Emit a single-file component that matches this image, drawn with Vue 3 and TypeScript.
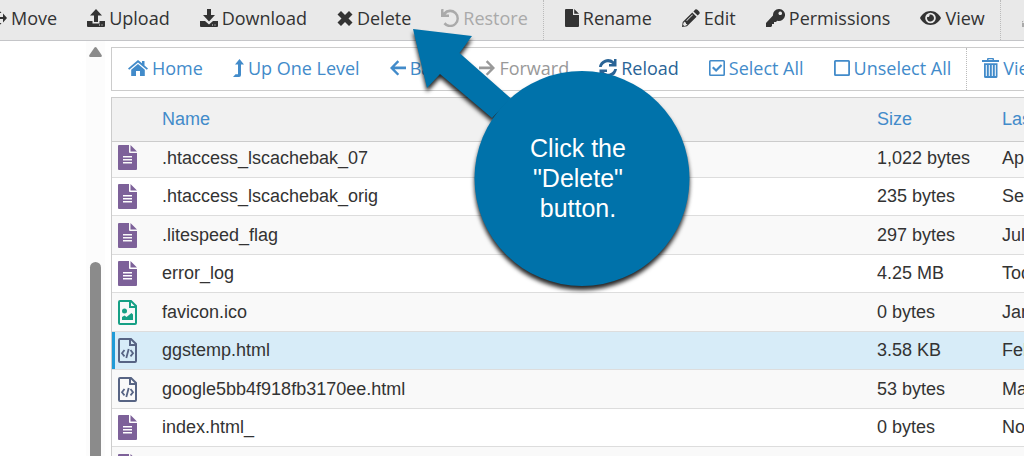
<script setup lang="ts">
type FileKind = 'text' | 'image' | 'code'

interface FileRow {
  name: string
  size: string
  modified: string
  kind: FileKind
  selected?: boolean
}

interface Action {
  label: string
  icon: string
  state?: 'disabled' | 'active'
  divider?: boolean
}

const mainActions: Action[] = [
  { label: 'Move', icon: 'move' },
  { label: 'Upload', icon: 'upload' },
  { label: 'Download', icon: 'download' },
  { label: 'Delete', icon: 'delete' },
  { label: 'Restore', icon: 'restore', state: 'disabled', divider: true },
  { label: 'Rename', icon: 'file' },
  { label: 'Edit', icon: 'pencil' },
  { label: 'Permissions', icon: 'key' },
  { label: 'View', icon: 'eye', divider: true },
]

const navActions: Action[] = [
  { label: 'Home', icon: 'home' },
  { label: 'Up One Level', icon: 'level' },
  { label: 'Back', icon: 'back' },
  { label: 'Forward', icon: 'forward', state: 'disabled' },
  { label: 'Reload', icon: 'reload', state: 'active' },
  { label: 'Select All', icon: 'checked' },
  { label: 'Unselect All', icon: 'unchecked', divider: true },
  { label: 'View Trash', icon: 'trash' },
]

const files: FileRow[] = [
  { name: '.htaccess_lscachebak_07', size: '1,022 bytes', modified: 'Apr', kind: 'text' },
  { name: '.htaccess_lscachebak_orig', size: '235 bytes', modified: 'Sep', kind: 'text' },
  { name: '.litespeed_flag', size: '297 bytes', modified: 'Jul', kind: 'text' },
  { name: 'error_log', size: '4.25 MB', modified: 'Today', kind: 'text' },
  { name: 'favicon.ico', size: '0 bytes', modified: 'Jan', kind: 'image' },
  { name: 'ggstemp.html', size: '3.58 KB', modified: 'Feb', kind: 'code', selected: true },
  { name: 'google5bb4f918fb3170ee.html', size: '53 bytes', modified: 'Mar', kind: 'code' },
  { name: 'index.html_', size: '0 bytes', modified: 'Nov', kind: 'text' },
  { name: '', size: '', modified: '', kind: 'text' },
]

/* Filled shapes, each with its own drawing box. */
const icons: Record<string, { w: number; h: number; d: string }> = {
  move: { w: 18, h: 18, d: 'M9 0l3.500 4H10v4h4V4.500L18 9l-4 4.500V10h-4v4h2.500L9 18l-3.500-4H8v-4H4v3.500L0 9l4-4.500V8h4V4H5.500z' },
  upload: { w: 18, h: 18, d: 'M9 0l6 6.500h-4V13H7V6.500H3zM0 12h5.500v2.500h7V12H18v5q0 1-1 1H1q-1 0-1-1zm12 3.500v1h1v-1zm2.500 0v1h1v-1z' },
  download: { w: 18, h: 18, d: 'M7 0h4v6h4l-6 6.500L3 6h4zM0 12h5l4 3.500 4-3.500h5v5q0 1-1 1H1q-1 0-1-1zm12 3.500v1h1v-1zm2.500 0v1h1v-1z' },
  delete: { w: 16, h: 15, d: 'M4 0l4 4 4-4 3.500 3.500-4 4 4 4L12 15l-4-4-4 4L.5 11.500l4-4-4-4z' },
  restore: { w: 18, h: 18, d: 'M1 0h1.500v3.600A8.800 8.800 0 1 1 2.500 15.200l1.900-1.900A6.200 6.200 0 1 0 4.600 5.500H8V8H0V1q0-1 1-1z' },
  file: { w: 14, h: 18, d: 'M1 0h7v6h6v11q0 1-1 1H1q-1 0-1-1V1q0-1 1-1zM9.200 0L14 4.800H9.200z' },
  pencil: { w: 18, h: 18, d: 'M12.400 1.400q1.500-2 3.300-.3l1.200 1.200q1.800 1.700-.2 3.300l-1 1-4.300-4.200zM10.300 3.500l4.300 4.300L5 17.300 0 18l.7-5zM3 12.500l-1.500 1.300-.4 2 1.100 1.100 2-.4L5.500 15H4v-1.500H3zM10.300 5.500l-6 6 .6.600 6-6z' },
  key: { w: 19, h: 18, d: 'M12.800 0a6 6 0 1 1-1.600 11.700L10 13H8v2H6v2l-1 1H0v-4l7-7.400A6 6 0 0 1 12.800 0zm1.400 2.500a1.800 1.800 0 1 0 .1 0z' },
  eye: { w: 21, h: 14, d: 'M10.500 0C15 0 19 2.800 21 7c-2 4.200-6 7-10.500 7S2 11.200 0 7C2 2.800 6 0 10.500 0zm0 1.700a5.300 5.300 0 1 0 0 10.600 5.300 5.300 0 0 0 0-10.600zm0 1.800a3.500 3.500 0 1 1-3.300 2.300A1.700 1.700 0 0 0 9.500 3.600z' },
  home: { w: 20, h: 16, d: 'M10 0l4 3.300V1h2.500v4.500L20 8.400l-1.200 1.400L10 2.500 1.200 9.800 0 8.400zM10 4l6.800 5.700V16H12v-5H8v5H3.200V9.700z' },
  level: { w: 11, h: 18, d: 'M6.500 0L11 5.500H8V16q0 2-2 2H0l2.500-2.700H5V5.500H2z' },
  back: { w: 16, h: 16, d: 'M7.500.2l1.700 1.700-4.600 4.700H16v2.600H4.600l4.600 4.700-1.700 1.700L0 7.900z' },
  forward: { w: 16, h: 16, d: 'M8.500.2L6.800 1.900l4.600 4.700H0v2.600h11.400l-4.600 4.700 1.700 1.700L16 7.900z' },
  reload: { w: 18, h: 18, d: 'M0 8A9 9 0 0 1 15 2.500V0h2.500v7.500H10V5h3.300A6.400 6.400 0 0 0 2.700 8zM18 10A9 9 0 0 1 3 15.500V18H.5v-7.500H8V13H4.700a6.400 6.400 0 0 0 10.600-3z' },
  checked: { w: 16, h: 16, d: 'M1.500 0h13Q16 0 16 1.500v13q0 1.500-1.500 1.500h-13Q0 16 0 14.500v-13Q0 0 1.500 0zm.1 1.600v12.800h12.800V1.600zM11.800 4.200l1.500 1.500-6.200 6.200L3 7.900l1.500-1.400 2.600 2.500z' },
  unchecked: { w: 16, h: 16, d: 'M1.500 0h13Q16 0 16 1.500v13q0 1.500-1.500 1.500h-13Q0 16 0 14.500v-13Q0 0 1.500 0zm.3 1.800v12.400h12.400V1.800z' },
  trash: { w: 17, h: 20, d: 'M5 2V1q0-1 1-1h5q1 0 1 1v1h5v2H0V2zm1.500-.7V2h4v-.7zM2 5.300h13.500V18.500q0 1.500-1.500 1.500H3.500Q2 20 2 18.500zM3.800 7v11h1V7zm3 0v11h1V7zm3 0v11h1V7zm3 0v11h1V7z' },
}
</script>

<template>
  <div class="app">
    <nav class="toolbar" aria-label="File actions">
      <template v-for="action in mainActions" :key="action.label">
        <button type="button" :class="['action', action.state]" :disabled="action.state === 'disabled'">
          <svg :width="icons[action.icon].w" :height="icons[action.icon].h" :viewBox="`0 0 ${icons[action.icon].w} ${icons[action.icon].h}`" aria-hidden="true">
            <path :d="icons[action.icon].d" fill="currentColor" fill-rule="evenodd" />
          </svg>
          <span>{{ action.label }}</span>
        </button>
        <i v-if="action.divider" class="divider"></i>
      </template>
      <button type="button" class="action disabled" disabled aria-label="Extract">
        <svg width="18" height="18" viewBox="0 0 18 18" aria-hidden="true">
          <path d="M7 5l-7 9h7zM11 5l7 9h-7zM0 12h2v6H0z" fill="currentColor" />
        </svg>
      </button>
    </nav>

    <div class="body">
      <aside class="sidebar">
        <div class="track">
          <svg class="track-arrow" width="13" height="10" viewBox="0 0 13 10" aria-hidden="true">
            <path d="M5.500.6q1-1.200 2 0L12.600 8q.8 2-1 2H1.400q-1.800 0-1-2z" fill="currentColor" />
          </svg>
          <div class="thumb"></div>
        </div>
      </aside>

      <main class="content">
        <nav class="navbar" aria-label="Navigation">
          <template v-for="action in navActions" :key="action.label">
            <button type="button" :class="['action', action.state]" :disabled="action.state === 'disabled'">
              <svg :width="icons[action.icon].w" :height="icons[action.icon].h" :viewBox="`0 0 ${icons[action.icon].w} ${icons[action.icon].h}`" aria-hidden="true">
                <path :d="icons[action.icon].d" fill="currentColor" fill-rule="evenodd" />
              </svg>
              <span>{{ action.label }}</span>
            </button>
            <i v-if="action.divider" class="divider"></i>
          </template>
        </nav>

        <table class="files">
          <colgroup>
            <col class="col-icon" />
            <col />
            <col class="col-size" />
            <col class="col-modified" />
          </colgroup>
          <thead>
            <tr>
              <th></th>
              <th scope="col">Name</th>
              <th scope="col">Size</th>
              <th scope="col">Last Modified</th>
            </tr>
          </thead>
          <tbody>
            <tr v-for="(file, index) in files" :key="index" :class="{ selected: file.selected }">
              <td :class="['kind', file.kind]">
                <svg width="19" height="25" viewBox="0 0 19 25" aria-hidden="true">
                  <path v-if="file.kind === 'text'" fill="currentColor" fill-rule="evenodd" d="M1 0h10v7q0 1 1 1h7v16q0 1-1 1H1q-1 0-1-1V1q0-1 1-1zm11.500 0L19 6.500h-6.500zM5 11v1.500h9V11zm0 3v1.500h9V14zm0 3v1.500h9V17z" />
                  <g v-else>
                    <path d="M2 1h11l5 5v17q0 1-1 1H2q-1 0-1-1V2q0-1 1-1zM12 1v6h6" fill="none" stroke="currentColor" stroke-width="2" />
                    <template v-if="file.kind === 'image'">
                      <circle cx="6.500" cy="11" r="2.500" fill="currentColor" />
                      <path d="M4 20v-3l2.500-1.500 2 1.500 5-4 1.500 1.500V20z" fill="currentColor" />
                    </template>
                    <path v-else d="M6.500 12L4 15.300l2.500 3M12.500 12l2.500 3.300-2.500 3M10.700 11L8.300 20" fill="none" stroke="currentColor" stroke-width="1.800" />
                  </g>
                </svg>
              </td>
              <td>{{ file.name }}</td>
              <td>{{ file.size }}</td>
              <td>{{ file.modified }}</td>
            </tr>
          </tbody>
        </table>
      </main>
    </div>

    <div class="callout" role="note">
      <svg class="callout-shape" width="278" height="258" viewBox="0 0 278 258" aria-hidden="true">
        <path d="M0 0l59 7-12.500 17L98 69.500 79 89 27 45 14 59z" fill="currentColor" />
        <circle cx="169" cy="149.500" r="107.500" fill="currentColor" />
      </svg>
      <p class="callout-text">Click the<br />"Delete"<br />button.</p>
    </div>
  </div>
</template>

<style>
body {
  margin: 0;
  background: #fff;
}
</style>

<style scoped>
.app {
  position: relative;
  display: flex;
  flex-direction: column;
  height: 100vh;
  overflow: hidden;
  font-family: "Liberation Sans", Arial, sans-serif;
  font-size: 18px;
  color: #333;
}

.toolbar {
  display: flex;
  flex: none;
  height: 40px;
  margin-left: -26px;
  background: #e9e9e9;
  border-bottom: 1px solid #c4c5c8;
}

.action {
  display: flex;
  flex: none;
  align-items: center;
  gap: 4px;
  padding: 0 15px 4px;
  border: 0;
  background: none;
  color: #333;
  font: 18px/24px "Open Sans", "Noto Sans", sans-serif;
  white-space: nowrap;
}

.action svg {
  flex: none;
}

.action.disabled {
  color: #aaa;
}

.divider {
  flex: none;
  border-left: 1px dotted #bbb;
}

.toolbar .divider {
  margin-right: 6px;
}

.body {
  display: flex;
  flex: 1;
  min-height: 0;
}

.sidebar {
  display: flex;
  flex: none;
  justify-content: flex-end;
  width: 105px;
  margin-right: 6px;
}

.track {
  display: flex;
  flex-direction: column;
  align-items: center;
  width: 19px;
  padding-top: 6px;
  background: #fcfcfc;
}

.track-arrow {
  flex: none;
  color: #8b8b8b;
}

.thumb {
  flex: 1;
  width: 11px;
  margin-top: 205px;
  border-radius: 6px 6px 0 0;
  background: #8b8b8b;
}

.content {
  flex: 1;
  min-width: 0;
  padding-top: 6px;
  overflow: hidden;
}

.navbar {
  display: flex;
  height: 42px;
  margin-bottom: 6px;
  padding-left: 1px;
  border: 1px solid #ccc;
  border-right: 0;
  overflow: hidden;
}

.navbar .action {
  padding-bottom: 2px;
  color: #428bca;
}

.navbar .action.disabled {
  color: #999;
}

.navbar .action.active {
  color: #2a6496;
}

.files {
  width: 100%;
  table-layout: fixed;
  border-collapse: separate;
  border-spacing: 0;
  border-top: 1px solid #ccc;
  border-left: 1px solid #ccc;
}

.col-icon {
  width: 50px;
}

.col-size {
  width: 125px;
}

.col-modified {
  width: 22px;
}

.files th {
  box-sizing: border-box;
  height: 44px;
  padding: 0;
  border-bottom: 1px solid #ccc;
  background: #f1f1f1;
  color: #428bca;
  font-weight: 400;
  text-align: left;
  white-space: nowrap;
}

.files td {
  box-sizing: border-box;
  height: 39px;
  padding: 0;
  border-bottom: 1px solid #ddd;
  line-height: 24px;
  white-space: nowrap;
}

.files tr:nth-child(even) td {
  height: 38px;
  padding-bottom: 1px;
}

.files tr:first-child td {
  height: 36px;
  padding-bottom: 4px;
}

.files tbody tr:nth-child(odd) {
  background: #f9f9f9;
}

.files tbody tr.selected {
  background: #d7ecf8;
}

.files td.kind {
  padding-left: 6px;
}

.files .selected td.kind {
  box-shadow: inset 3px 0 #1f9bd7;
}

.kind svg {
  display: block;
}

.kind.text {
  color: #7d6199;
}

.kind.image {
  color: #16a085;
}

.kind.code {
  color: #576484;
}

.callout {
  position: absolute;
  top: 29px;
  left: 413px;
}

.callout-shape {
  display: block;
  overflow: visible;
  color: #0072aa;
  filter: drop-shadow(0 4px 2px rgba(0, 0, 0, 0.85));
}

.callout-text {
  position: absolute;
  top: 104px;
  left: 65px;
  width: 200px;
  margin: 0;
  color: #fff;
  font-size: 25px;
  line-height: 30px;
  text-align: center;
}
</style>
